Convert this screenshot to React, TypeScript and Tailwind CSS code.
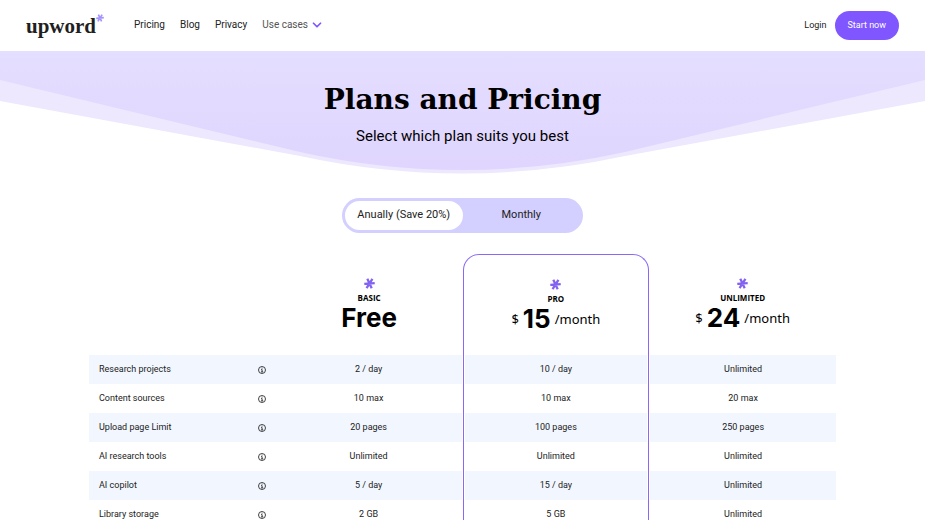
import { useState } from "react";
import { ChevronDown } from "lucide-react";

const links = ["Pricing", "Blog", "Privacy"];

const plans = [
  { name: "BASIC", price: "Free", monthly: "Free", paid: false },
  { name: "PRO", price: "15", monthly: "19", paid: true },
  { name: "UNLIMITED", price: "24", monthly: "30", paid: true },
];

const features = [
  { label: "Research projects", values: ["2 / day", "10 / day", "Unlimited"] },
  { label: "Content sources", values: ["10 max", "10 max", "20 max"] },
  { label: "Upload page Limit", values: ["20 pages", "100 pages", "250 pages"] },
  { label: "AI research tools", values: ["Unlimited", "Unlimited", "Unlimited"] },
  { label: "AI copilot", values: ["5 / day", "15 / day", "Unlimited"] },
  { label: "Library storage", values: ["2 GB", "5 GB", "Unlimited"] },
];

function Star({ className }: { className?: string }) {
  return (
    <svg viewBox="0 0 12 12" className={className} fill="none" stroke="currentColor" strokeWidth="2.5" aria-hidden="true">
      <path d="M0.3 6.5 11.7 5.5M3.6 0.8 8.4 11.2M9.2 0.9 2.8 11.1" />
    </svg>
  );
}

function InfoIcon() {
  return (
    <svg viewBox="0 0 16 16" className="size-2" fill="none" stroke="currentColor" strokeWidth="1.7" aria-hidden="true">
      <circle cx="8" cy="8" r="7" />
      <path d="M6.2 7.2H8.2V11.8M6 11.8H10.4M7.2 4.4H8.9" />
    </svg>
  );
}

function Navbar() {
  return (
    <header className="flex h-[51px] items-center justify-between bg-white px-[26px]">
      <div className="flex items-center gap-[30px]">
        <a href="#" className="flex items-start font-['Liberation_Serif',serif] text-[21px] leading-6 font-bold text-[#1f1f1f]">
          upword
          <Star className="size-2 text-[#a692ff]" />
        </a>
        <nav className="flex items-center gap-[15px] pb-[2px] text-[10px] text-[#222]">
          {links.map((link) => (
            <a key={link} href="#" className="hover:text-[#7f56ff]">
              {link}
            </a>
          ))}
          <button type="button" className="flex items-center gap-[2px] text-[#555]">
            Use cases
            <ChevronDown size={14} strokeWidth={3} className="text-[#7f56ff]" />
          </button>
        </nav>
      </div>
      <div className="flex items-center gap-2 text-[9px]">
        <a href="#" className="text-[#222]">
          Login
        </a>
        <button type="button" className="h-[29px] rounded-full bg-[#7f56ff] px-[13px] text-white">
          Start now
        </button>
      </div>
    </header>
  );
}

function Hero() {
  return (
    <section className="relative h-[123px] text-center text-black">
      <svg viewBox="0 0 925 123" preserveAspectRatio="none" className="absolute inset-0 size-full" aria-hidden="true">
        <defs>
          <linearGradient id="hero" x1="0" y1="0" x2="0" y2="1">
            <stop offset="0" stopColor="#e4deff" />
            <stop offset="1" stopColor="#dfd5fe" />
          </linearGradient>
        </defs>
        <path d="M0 0H925V50L625 105Q462 140 300 105L0 50Z" fill="#ede8fe" />
        <path d="M0 0H925V29L625 101Q462 137 300 101L0 29Z" fill="url(#hero)" />
      </svg>
      <div className="relative pt-[29px]">
        <h1 className="font-['DejaVu_Serif',serif] text-[28px] leading-10 font-bold">Plans and Pricing</h1>
        <p className="text-[15px] leading-8">Select which plan suits you best</p>
      </div>
    </section>
  );
}

export default function App() {
  const [annual, setAnnual] = useState(true);

  return (
    <div className="min-h-screen bg-white font-['Roboto',sans-serif]">
      <Navbar />
      <Hero />
      <main className="mx-auto max-w-[747px] pt-6">
        <div className="mx-auto flex h-[35px] w-[241px] rounded-full bg-[#d3cfff] p-[3px] text-[11px] text-[#222]">
          <button
            type="button"
            aria-pressed={annual}
            onClick={() => setAnnual(true)}
            className={annual ? "flex-1 rounded-full bg-white" : "flex-1 rounded-full"}
          >
            Anually (Save 20%)
          </button>
          <button
            type="button"
            aria-pressed={!annual}
            onClick={() => setAnnual(false)}
            className={annual ? "flex-1 rounded-full" : "flex-1 rounded-full bg-white"}
          >
            Monthly
          </button>
        </div>

        <table className="mt-[21px] w-full table-fixed border-separate border-spacing-0 text-[9px] text-[#222]">
          <thead>
            <tr>
              <td />
              {plans.map((plan) => (
                <th
                  key={plan.name}
                  scope="col"
                  className={
                    plan.name === "PRO"
                      ? "h-[101px] rounded-t-[16px] border border-b-0 border-[#8a68f5] p-0 pt-6 align-top"
                      : "h-[101px] p-0 pt-6 align-top"
                  }
                >
                  <Star className="mx-auto size-[11px] text-[#8364f2]" />
                  <div className="mt-[3px] font-['Open_Sans',sans-serif] text-[8px] leading-3 font-bold text-black">{plan.name}</div>
                  <div className="flex items-center justify-center gap-1 font-['Noto_Sans',sans-serif] text-[13px] leading-7 font-normal text-black">
                    {plan.paid && <span>$</span>}
                    <span className="font-['Inter',sans-serif] text-[26px] font-bold">{annual ? plan.price : plan.monthly}</span>
                    {plan.paid && <span>/month</span>}
                  </div>
                </th>
              ))}
            </tr>
          </thead>
          <tbody className="text-center leading-[29px]">
            {features.map((feature) => (
              <tr key={feature.label} className="group">
                <th scope="row" className="p-0 px-[10px] text-left font-normal group-odd:bg-[#f2f7ff]">
                  <div className="flex items-center justify-between">
                    {feature.label}
                    <InfoIcon />
                  </div>
                </th>
                <td className="border-r border-white p-0 group-odd:bg-[#f2f7ff]">{feature.values[0]}</td>
                <td className="border-x border-[#8a68f5] bg-clip-content p-0 px-px group-odd:bg-[#f2f7ff]">{feature.values[1]}</td>
                <td className="border-l border-white p-0 group-odd:bg-[#f2f7ff]">{feature.values[2]}</td>
              </tr>
            ))}
          </tbody>
        </table>
      </main>
    </div>
  );
}
